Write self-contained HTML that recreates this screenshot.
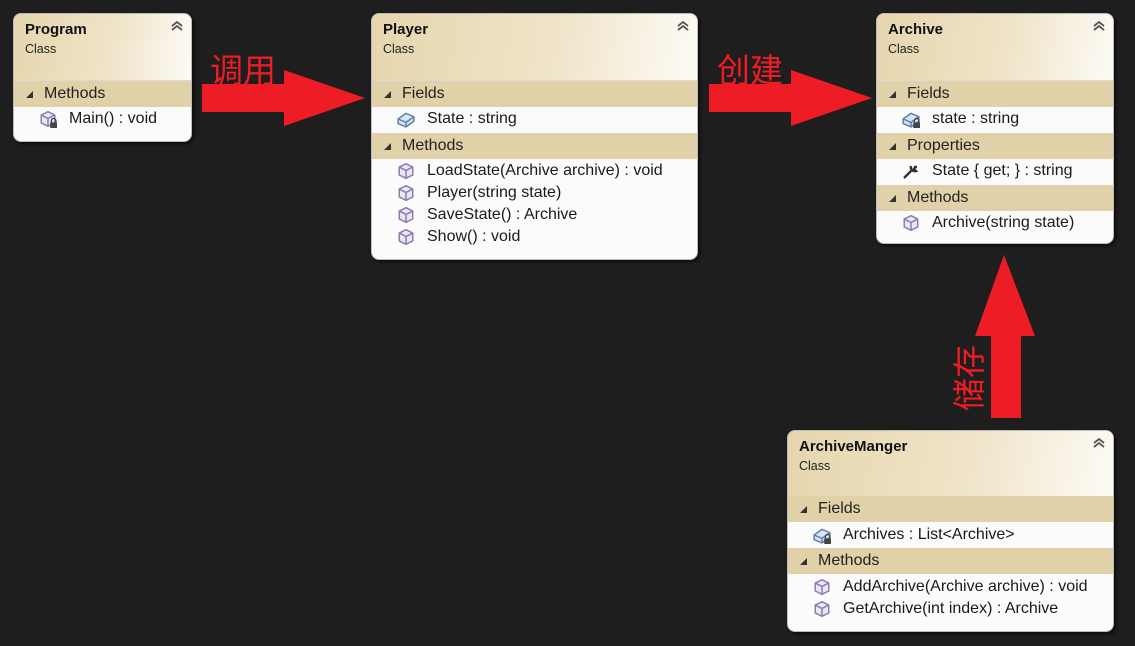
<!DOCTYPE html>
<html><head><meta charset="utf-8"><style>
body{margin:0;width:1135px;height:646px;background:#1e1e1e;position:relative;overflow:hidden;font-family:"Liberation Sans","Noto Sans CJK SC",sans-serif;}
.box{position:absolute;background:#fbfbfb;border-radius:8px;overflow:hidden;box-shadow:2px 2px 3px rgba(0,0,0,.6);border:1px solid #bbb;box-sizing:border-box}
.hd{position:absolute;left:0;right:0;top:0;height:66px;background:linear-gradient(100deg,#e6d6ae 0%,#efe4c8 55%,#fdfbf6 100%);border-bottom:1px solid #d8d8d8}
.t{position:absolute;left:11px;top:7px;font-weight:bold;font-size:15px;color:#111}
.c{position:absolute;left:11px;top:28px;font-size:12.5px;color:#222}
.chev{position:absolute;right:8px;top:6px}
.sec{position:absolute;left:0;right:0;height:26px;background:#e0d1a8;font-size:16px;color:#222;line-height:26px}
.sec span{position:absolute;left:30px}
.sec i{position:absolute;left:12px;top:10px;width:0;height:0;border-left:7px solid transparent;border-bottom:7px solid #333}
.it{position:absolute;left:0;right:0;height:22px;font-size:16px;color:#1a1a1a;line-height:22px}
.it span{position:absolute}
.it svg{position:absolute;top:2px}
.red{position:absolute;color:#ee1c24;font-size:33px}
</style></head><body>
<svg width="0" height="0" style="position:absolute"><defs>
<g id="cube"><path d="M8 1.5L14 4.5V11.5L8 14.5L2 11.5V4.5Z" fill="#ece6f4" stroke="#8a7ab0" stroke-width="1.3"/><path d="M2 4.5L8 7.5L14 4.5M8 7.5V14.5" fill="none" stroke="#8a7ab0" stroke-width="1.3"/></g>
<g id="fld"><path d="M1 8L8 3L15 6V10L8 15L1 12Z" fill="#d8e6f4" stroke="#5a7ea8" stroke-width="1.3"/><path d="M1 8L8 11L15 6M8 11V15" fill="none" stroke="#5a7ea8" stroke-width="1.3"/></g>
<g id="lock"><rect x="10" y="11" width="6" height="5" fill="#444"/><path d="M11 11V9.5a2 2 0 0 1 4 0V11" fill="none" stroke="#444" stroke-width="1.2"/></g>
<g id="chv"><path d="M1 6L6 2L11 6M1 10L6 6L11 10" fill="none" stroke="#555" stroke-width="1.8"/></g>
</defs></svg>

<!-- Program -->
<div class="box" style="left:13px;top:13px;width:179px;height:129px">
<div class="hd"></div><div class="t">Program</div><div class="c">Class</div><svg class="chev" width="12" height="12"><use href="#chv"/></svg>
<div class="sec" style="top:67px"><i></i><span>Methods</span></div>
<div class="it" style="top:94px"><svg width="18" height="18" viewBox="0 0 16 16" style="left:25px"><use href="#cube"/><use href="#lock"/></svg><span style="left:55px">Main() : void</span></div>
</div>

<!-- Player -->
<div class="box" style="left:371px;top:13px;width:327px;height:247px">
<div class="hd"></div><div class="t">Player</div><div class="c">Class</div><svg class="chev" width="12" height="12"><use href="#chv"/></svg>
<div class="sec" style="top:67px"><i></i><span>Fields</span></div>
<div class="it" style="top:94px"><svg width="18" height="18" viewBox="0 0 16 16" style="left:25px"><use href="#fld"/></svg><span style="left:55px">State : string</span></div>
<div class="sec" style="top:119px"><i></i><span>Methods</span></div>
<div class="it" style="top:146px"><svg width="18" height="18" viewBox="0 0 16 16" style="left:25px"><use href="#cube"/></svg><span style="left:55px">LoadState(Archive archive) : void</span></div>
<div class="it" style="top:168px"><svg width="18" height="18" viewBox="0 0 16 16" style="left:25px"><use href="#cube"/></svg><span style="left:55px">Player(string state)</span></div>
<div class="it" style="top:190px"><svg width="18" height="18" viewBox="0 0 16 16" style="left:25px"><use href="#cube"/></svg><span style="left:55px">SaveState() : Archive</span></div>
<div class="it" style="top:212px"><svg width="18" height="18" viewBox="0 0 16 16" style="left:25px"><use href="#cube"/></svg><span style="left:55px">Show() : void</span></div>
</div>

<!-- Archive -->
<div class="box" style="left:876px;top:13px;width:238px;height:231px">
<div class="hd"></div><div class="t">Archive</div><div class="c">Class</div><svg class="chev" width="12" height="12"><use href="#chv"/></svg>
<div class="sec" style="top:67px"><i></i><span>Fields</span></div>
<div class="it" style="top:94px"><svg width="18" height="18" viewBox="0 0 16 16" style="left:25px"><use href="#fld"/><use href="#lock"/></svg><span style="left:55px">state : string</span></div>
<div class="sec" style="top:119px"><i></i><span>Properties</span></div>
<div class="it" style="top:146px"><svg width="18" height="18" style="left:25px"><path d="M2 16L10 8M9 4a4 4 0 0 0 5 5l-2-2 1-2 2 0" fill="none" stroke="#333" stroke-width="2.4"/></svg><span style="left:55px">State { get; } : string</span></div>
<div class="sec" style="top:171px"><i></i><span>Methods</span></div>
<div class="it" style="top:198px"><svg width="18" height="18" viewBox="0 0 16 16" style="left:25px"><use href="#cube"/></svg><span style="left:55px">Archive(string state)</span></div>
</div>

<!-- ArchiveManger -->
<div class="box" style="left:787px;top:430px;width:327px;height:202px">
<div class="hd"></div><div class="t">ArchiveManger</div><div class="c">Class</div><svg class="chev" width="12" height="12"><use href="#chv"/></svg>
<div class="sec" style="top:65px"><i></i><span>Fields</span></div>
<div class="it" style="top:93px"><svg width="18" height="18" viewBox="0 0 16 16" style="left:25px"><use href="#fld"/><use href="#lock"/></svg><span style="left:55px">Archives : List&lt;Archive&gt;</span></div>
<div class="sec" style="top:117px"><i></i><span>Methods</span></div>
<div class="it" style="top:145px"><svg width="18" height="18" viewBox="0 0 16 16" style="left:25px"><use href="#cube"/></svg><span style="left:55px">AddArchive(Archive archive) : void</span></div>
<div class="it" style="top:167px"><svg width="18" height="18" viewBox="0 0 16 16" style="left:25px"><use href="#cube"/></svg><span style="left:55px">GetArchive(int index) : Archive</span></div>
</div>

<!-- arrows -->
<svg width="1135" height="646" style="position:absolute;left:0;top:0">
<polygon points="202,84 284,84 284,70 365,98 284,126 284,112 202,112" fill="#ee1c24"/>
<polygon points="709,84 791,84 791,70 872,98 791,126 791,112 709,112" fill="#ee1c24"/>
<polygon points="991,418 991,336 975,336 1004,255 1035,336 1021,336 1021,418" fill="#ee1c24"/>
</svg>
<div class="red" style="left:210px;top:44px">调用</div>
<div class="red" style="left:717px;top:44px">创建</div>
<div class="red" style="left:936px;top:358px;transform:rotate(-90deg);transform-origin:center;width:68px;height:38px;line-height:38px">储存</div>
</body></html>
